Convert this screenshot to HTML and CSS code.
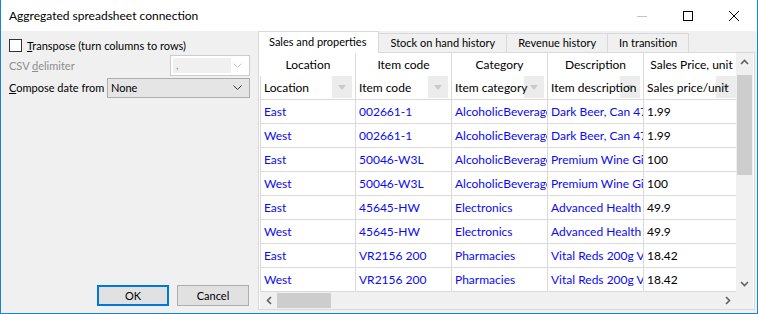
FILE: index.html
```html
<!DOCTYPE html>
<html lang="en">

<head>
    <meta charset="UTF-8">
    <meta name="viewport" content="width=device-width, initial-scale=1.0">
    <title>Aggregated spreadsheet connection</title>
    <link rel="stylesheet" href="styles.css">
</head>

<body>
    <div class="window">
        <div class="titlebar">
            <span class="title">Aggregated spreadsheet connection</span>
            <div class="caption">
                <span class="caption-btn">
                    <svg width="10" height="10" viewBox="0 0 10 10"><path d="M0 5.5h10" stroke="#c4c4c4" /></svg>
                </span>
                <span class="caption-btn">
                    <svg width="10" height="10" viewBox="0 0 10 10"><rect x="0.5" y="0.5" width="9" height="9" fill="none" stroke="#000" /></svg>
                </span>
                <span class="caption-btn">
                    <svg width="10" height="10" viewBox="0 0 10 10"><path d="M0 0L10 10M10 0L0 10" stroke="#000" /></svg>
                </span>
            </div>
        </div>

        <div class="client">
            <div class="options">
                <label class="check-row">
                    <span class="checkbox"></span>
                    <span><u>T</u>ranspose (turn columns to rows)</span>
                </label>
                <div class="field-row disabled">
                    <span>CSV <u>d</u>elimiter</span>
                    <div class="combo combo-small">
                        <span class="combo-edit">,</span>
                        <svg width="9" height="5" viewBox="0 0 9 5"><path d="M0.5 0.5L4.5 4.5L8.5 0.5" fill="none" stroke="#c4c4c4" /></svg>
                    </div>
                </div>
                <div class="field-row">
                    <span><u>C</u>ompose date from</span>
                    <div class="combo combo-wide">
                        <span class="combo-text">None</span>
                        <svg width="9" height="5" viewBox="0 0 9 5"><path d="M0.5 0.5L4.5 4.5L8.5 0.5" fill="none" stroke="#333" /></svg>
                    </div>
                </div>
                <div class="buttons">
                    <button class="btn btn-default">OK</button>
                    <button class="btn">Cancel</button>
                </div>
            </div>

            <div class="tabs">
                <div class="tab-strip">
                    <span class="tab active">Sales and properties</span>
                    <span class="tab">Stock on hand history</span>
                    <span class="tab">Revenue history</span>
                    <span class="tab">In transition</span>
                </div>
                <div class="tab-pane">
                    <div class="grid-area">
                        <div class="grid-view">
                            <table class="grid">
                                <colgroup>
                                    <col class="col">
                                    <col class="col">
                                    <col class="col">
                                    <col class="col">
                                    <col class="col">
                                </colgroup>
                                <tr class="head-caption">
                                    <td class="first">Location</td>
                                    <td>Item code</td>
                                    <td>Category</td>
                                    <td>Description</td>
                                    <td>Sales Price, unit</td>
                                </tr>
                                <tr class="head-field">
                                    <td class="first"><span class="filter"></span><span class="label">Location</span></td>
                                    <td><span class="filter"></span><span class="label">Item code</span></td>
                                    <td><span class="filter"></span><span class="label">Item category</span></td>
                                    <td><span class="filter"></span><span class="label">Item description</span></td>
                                    <td><span class="filter"></span><span class="label">Sales price/unit</span></td>
                                </tr>
                                <tr>
                                    <td class="first link">East</td><td class="link">002661-1</td><td class="link">AlcoholicBeverages</td><td class="link">Dark Beer, Can 473ml</td><td>1.99</td>
                                </tr>
                                <tr>
                                    <td class="first link">West</td><td class="link">002661-1</td><td class="link">AlcoholicBeverages</td><td class="link">Dark Beer, Can 473ml</td><td>1.99</td>
                                </tr>
                                <tr>
                                    <td class="first link">East</td><td class="link">50046-W3L</td><td class="link">AlcoholicBeverages</td><td class="link">Premium Wine Gift Box</td><td>100</td>
                                </tr>
                                <tr>
                                    <td class="first link">West</td><td class="link">50046-W3L</td><td class="link">AlcoholicBeverages</td><td class="link">Premium Wine Gift Box</td><td>100</td>
                                </tr>
                                <tr>
                                    <td class="first link">East</td><td class="link">45645-HW</td><td class="link">Electronics</td><td class="link">Advanced Health Monitor</td><td>49.9</td>
                                </tr>
                                <tr>
                                    <td class="first link">West</td><td class="link">45645-HW</td><td class="link">Electronics</td><td class="link">Advanced Health Monitor</td><td>49.9</td>
                                </tr>
                                <tr>
                                    <td class="first link">East</td><td class="link">VR2156 200</td><td class="link">Pharmacies</td><td class="link">Vital Reds 200g Vial</td><td>18.42</td>
                                </tr>
                                <tr>
                                    <td class="first link">West</td><td class="link">VR2156 200</td><td class="link">Pharmacies</td><td class="link">Vital Reds 200g Vial</td><td>18.42</td>
                                </tr>
                            </table>
                        </div>
                        <div class="vscroll">
                            <span class="arrow">
                                <svg width="9" height="6" viewBox="0 0 9 6"><path d="M1 5L4.5 1.5L8 5" fill="none" stroke="#606060" stroke-width="1.6" /></svg>
                            </span>
                            <span class="vthumb"></span>
                            <span class="spacer"></span>
                            <span class="arrow">
                                <svg width="9" height="6" viewBox="0 0 9 6"><path d="M1 1L4.5 4.5L8 1" fill="none" stroke="#606060" stroke-width="1.6" /></svg>
                            </span>
                        </div>
                    </div>
                    <div class="hscroll-row">
                        <div class="hscroll">
                            <span class="arrow">
                                <svg width="6" height="9" viewBox="0 0 6 9"><path d="M5 1L1.5 4.5L5 8" fill="none" stroke="#606060" stroke-width="1.6" /></svg>
                            </span>
                            <span class="hthumb"></span>
                            <span class="spacer"></span>
                            <span class="arrow">
                                <svg width="6" height="9" viewBox="0 0 6 9"><path d="M1 1L4.5 4.5L1 8" fill="none" stroke="#606060" stroke-width="1.6" /></svg>
                            </span>
                        </div>
                        <div class="corner"></div>
                    </div>
                </div>
            </div>
        </div>
    </div>
</body>

</html>
```

FILE: styles.css
```css
* {
    box-sizing: border-box;
}

html,
body {
    margin: 0;
    padding: 0;
    background-color: #fff;
    font-family: Lato, 'Noto Sans', sans-serif;
    font-size: 11px;
    color: #000;
}

.window {
    width: 758px;
    height: 314px;
    display: flex;
    flex-direction: column;
    background-color: #f0f0f0;
    border: 1px solid #1883d7;
    border-top: none;
}

/* title bar */

.titlebar {
    flex: 0 0 31px;
    display: flex;
    align-items: center;
    padding-left: 8px;
    background-color: #fff;
    font-size: 12px;
}

.title {
    flex: 1;
}

.caption {
    display: flex;
    align-self: stretch;
}

.caption-btn {
    width: 46px;
    display: flex;
    align-items: center;
    justify-content: center;
}

.caption-btn svg {
    display: block;
}

.client {
    flex: 1;
    display: flex;
    min-height: 0;
}

/* left options */

.options {
    flex: 0 0 257px;
    display: flex;
    flex-direction: column;
    padding: 4px 8px 7px 8px;
}

.check-row {
    height: 20px;
    display: flex;
    align-items: center;
    gap: 5px;
}

.checkbox {
    width: 13px;
    height: 13px;
    border: 1px solid #333;
    background-color: #fff;
}

.field-row {
    height: 21px;
    display: flex;
    align-items: center;
    margin-bottom: 1px;
    white-space: nowrap;
}

.field-row.disabled {
    color: #8d8d8d;
}

.combo {
    margin-left: auto;
    height: 100%;
    display: flex;
    align-items: center;
    justify-content: space-between;
    padding: 0 7px 0 3px;
}

.combo-small {
    width: 80px;
    border: 1px solid #ccc;
    background-color: #fff;
    padding-left: 2px;
}

.combo-edit {
    width: 58px;
    height: 15px;
    background-color: #f0f0f0;
    padding-left: 3px;
    line-height: 13px;
}

.combo-wide {
    width: 143px;
    height: 20px;
    border: 1px solid #adadad;
    background-color: #e5e5e5;
}

.buttons {
    margin-top: auto;
    display: flex;
    justify-content: flex-end;
    gap: 8px;
    padding-right: 1px;
}

.btn {
    width: 72px;
    height: 21px;
    padding: 0;
    font-family: inherit;
    font-size: 11px;
    color: #000;
    background-color: #e1e1e1;
    border: 1px solid #adadad;
}

.btn-default {
    border: 2px solid #0078d7;
}

/* tabs */

.tabs {
    flex: 1;
    min-width: 0;
    display: flex;
    flex-direction: column;
    padding: 0 2px 3px 0;
}

.tab-strip {
    flex: 0 0 21px;
    display: flex;
    align-items: flex-end;
}

.tab {
    height: 19px;
    padding: 0 11px 0 11px;
    line-height: 18px;
    border: 1px solid #d9d9d9;
    border-bottom: none;
    border-left: none;
    background-color: #f0f0f0;
}

.tab.active {
    position: relative;
    height: 22px;
    margin-bottom: -1px;
    padding: 0 12px 0 10px;
    line-height: 20px;
    border-left: 1px solid #d9d9d9;
    background-color: #fff;
}

.tab-pane {
    flex: 1;
    min-height: 0;
    display: flex;
    flex-direction: column;
    padding: 0 1px 1px 1px;
    border: 1px solid #d9d9d9;
    background-color: #fff;
}

.grid-area {
    flex: 0 0 238px;
    display: flex;
}

.grid-view {
    flex: 1;
    min-width: 0;
    overflow: hidden;
}

.grid {
    table-layout: fixed;
    width: 480px;
    border-spacing: 0;
    font-size: 12px;
}

.col {
    width: 96px;
}

.grid td {
    height: 24px;
    padding: 0 0 0 3px;
    white-space: nowrap;
    overflow: hidden;
    border-right: 1px solid #dadada;
    border-bottom: 1px solid #dadada;
}

.grid td.first {
    border-left: 1px solid #dadada;
}

.grid .head-caption td {
    height: 23px;
    padding: 0;
    text-align: center;
    border-bottom: none;
}

.grid .head-caption td.first {
    border-left-color: #fff;
}

.grid .head-field td {
    position: relative;
}

.filter {
    position: absolute;
    top: 0;
    right: 3px;
    width: 20px;
    height: 22px;
    background-color: #ececec;
}

.filter::after {
    content: "";
    position: absolute;
    left: 6px;
    top: 9px;
    border-left: 4px solid transparent;
    border-right: 4px solid transparent;
    border-top: 5px solid #c9c9c9;
}

.head-field .label {
    position: relative;
}

.grid td.link {
    color: #0a0af5;
}

/* scroll bars */

.vscroll {
    flex: 0 0 17px;
    display: flex;
    flex-direction: column;
    background-color: #f0f0f0;
}

.arrow {
    flex: 0 0 17px;
    height: 17px;
    display: flex;
    align-items: center;
    justify-content: center;
}

.arrow svg {
    display: block;
}

.vthumb {
    height: 100px;
    margin: 5px 1px 0 1px;
    background-color: #cdcdcd;
}

.spacer {
    flex: 1;
}

.hscroll-row {
    flex: 0 0 17px;
    display: flex;
}

.hscroll {
    flex: 1;
    display: flex;
    background-color: #f0f0f0;
}

.hthumb {
    width: 54px;
    margin: 1px 0;
    background-color: #cdcdcd;
}

.corner {
    width: 17px;
    background-color: #f0f0f0;
}
```
